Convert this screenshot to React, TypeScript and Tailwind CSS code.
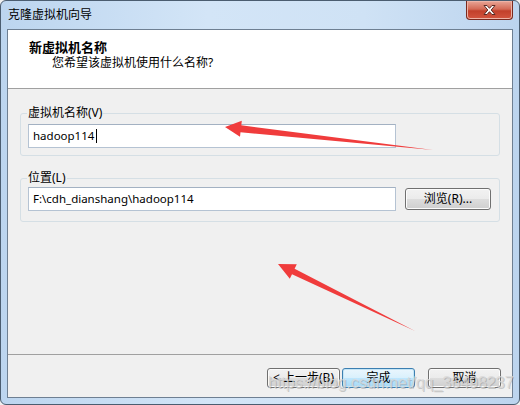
import React from "react";

const font = "font-['Noto_Sans','Noto_Sans_CJK_SC',sans-serif]";

function WinButton({
  children,
  focused = false,
  className = "",
}: {
  children: React.ReactNode;
  focused?: boolean;
  className?: string;
}) {
  return (
    <button
      className={
        "flex items-center justify-center rounded-[3px] border text-[12px] leading-none text-black " +
        (focused
          ? "border-[#3c7fb1] bg-[linear-gradient(#eaf6fd_0%,#d9f0fc_50%,#bee6fd_51%,#a7d9f5_100%)] shadow-[inset_0_0_0_1px_#c4e5f6] "
          : "border-[#707070] bg-[linear-gradient(#f2f2f2_0%,#ebebeb_50%,#dddddd_51%,#cfcfcf_100%)] shadow-[inset_0_0_0_1px_#fcfcfc] ") +
        className
      }
    >
      {children}
    </button>
  );
}

function TextBox({ value, caret = false }: { value: string; caret?: boolean }) {
  return (
    <div className="flex h-[24px] w-[368px] items-center border border-[#b5c3d3] border-t-[#a3b1c2] bg-white pl-[4px] text-[11.5px] text-black">
      <span>{value}</span>
      {caret && <span className="ml-[2px] h-[14px] w-px bg-black" />}
    </div>
  );
}

export default function App() {
  return (
    <div className={"relative h-[405px] w-[520px] overflow-hidden bg-[#f0f0f0] " + font}>
      <div className="flex h-full w-full flex-col rounded-[6px] border border-[#4b5d70] bg-[linear-gradient(90deg,#bcd5ef_0%,#d3e5f7_40%,#cfe2f5_70%,#bcd4ee_100%)]">
        {/* title bar */}
        <div className="flex h-[28px] items-start justify-between pl-[7px] pr-[6px]">
          <span className="mt-[6px] text-[12px] leading-[16px] text-black">克隆虚拟机向导</span>
          <div className="flex h-[19px] w-[47px] items-center justify-center rounded-b-[4px] border border-t-0 border-[#7a2a1f] bg-[linear-gradient(#e9a697_0%,#d46a56_45%,#c2402b_55%,#d3553f_100%)] shadow-[inset_0_0_0_1px_#eeb3a6]">
            <svg width="15" height="12" viewBox="0 0 15 12">
              <path
                d="M2 1.5 L5 1.5 L7.5 4.3 L10 1.5 L13 1.5 L9.2 6 L13 10.5 L10 10.5 L7.5 7.7 L5 10.5 L2 10.5 L5.8 6 Z"
                fill="#ffffff"
                stroke="#5a2a24"
                strokeWidth="1"
                strokeLinejoin="round"
              />
            </svg>
          </div>
        </div>

        {/* client area */}
        <div className="mx-[6px] mb-[6px] flex flex-1 flex-col border border-[#6e7f92] bg-[#f0f0f0]">
          <div className="h-[59px] border-b border-[#a0a0a0] bg-white pl-[21px] pt-[9px]">
            <div className="text-[13px] font-bold leading-[16px] text-black">新虚拟机名称</div>
            <div className="pl-[23px] text-[12px] leading-[16px] text-black">您希望该虚拟机使用什么名称?</div>
          </div>

          <div className="flex flex-1 flex-col gap-[14px] px-[12px] pt-[16px]">
            <fieldset className="rounded-[3px] border border-[#d5dfe5] pb-[7px] pl-[7px] pt-[3px]">
              <legend className="-ml-px px-px text-[12px] leading-[16px] text-black">虚拟机名称(V)</legend>
              <TextBox value="hadoop114" caret />
            </fieldset>

            <fieldset className="rounded-[3px] border border-[#d5dfe5] pb-[10px] pl-[7px] pt-[1px]">
              <legend className="-ml-px px-px text-[12px] leading-[16px] text-black">位置(L)</legend>
              <div className="flex items-center gap-[9px]">
                <TextBox value="F:\cdh_dianshang\hadoop114" />
                <WinButton className="h-[22px] w-[86px]">浏览(R)...</WinButton>
              </div>
            </fieldset>
          </div>

          <div className="flex h-[43px] items-start justify-end border-t border-[#a0a0a0] pr-[11px] pt-[13px]">
            <WinButton className="h-[20px] w-[73px]">&lt; 上一步(B)</WinButton>
            <WinButton focused className="ml-[2px] h-[20px] w-[73px]">完成</WinButton>
            <WinButton className="ml-[13px] h-[20px] w-[73px]">取消</WinButton>
          </div>
        </div>
      </div>

      {/* watermark */}
      <div className="pointer-events-none absolute left-[268px] top-[373px] font-['Liberation_Sans',sans-serif] text-[16px] leading-[20px] text-[#d8d8d8]/80 [text-shadow:1px_1px_0_rgba(120,120,120,0.35)]">
        https://blog.csdn.net/qq_36498237
      </div>

      {/* red annotation arrows */}
      <svg className="pointer-events-none absolute left-0 top-0" width="520" height="405">
        <polygon
          points="225,127 241.8,120.8 241.3,125.3 433,150 240.5,132.3 240,136.7"
          fill="#f03c3c"
        />
        <polygon
          points="278,264 296.8,264.3 294.6,268.8 415,331 292,274.2 289.8,278.7"
          fill="#f03c3c"
        />
      </svg>
    </div>
  );
}
